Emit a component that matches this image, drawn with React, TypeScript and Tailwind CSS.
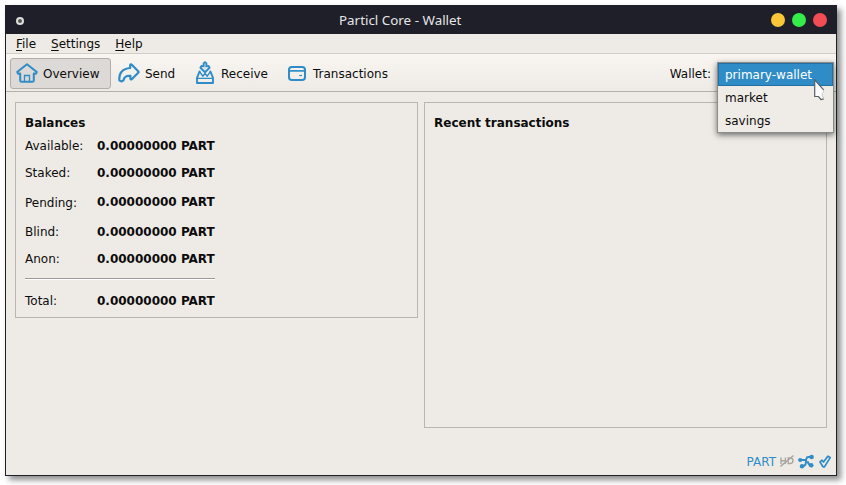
import React from "react";

const BLUE = "#308cc6";

function HomeIcon() {
  return (
    <svg width="22" height="20" viewBox="0 0 22 20" fill="none" stroke={BLUE} strokeWidth="2" strokeLinejoin="round" strokeLinecap="round">
      <path d="M11 1.2 L1.2 9 L2.2 10.8 L4.2 10.4 V17.4 Q4.2 18.8 5.6 18.8 H16.4 Q17.8 18.8 17.8 17.4 V10.4 L19.8 10.8 L20.8 9 Z" />
      <path d="M8.5 18.5 V12.5 H13.5 V18.5" strokeWidth="1.3" strokeLinejoin="miter" />
    </svg>
  );
}

function SendIcon() {
  return (
    <svg width="22" height="20" viewBox="0 0 22 20" fill="none" stroke={BLUE} strokeWidth="2.2" strokeLinejoin="round" strokeLinecap="round">
      <path d="M12.2 2 Q12.8 0.8 13.8 1.8 L20.2 8.2 Q21 9 20.2 9.8 L14 16 Q12.4 17 12.4 15.6 V12.8 C8.4 12.4 6.2 13.6 5.4 17.4 L3.8 18.4 L1.4 17.4 C0.6 9.4 5 5.6 12.2 5 Z" />
    </svg>
  );
}

function ReceiveIcon() {
  return (
    <svg width="18" height="23" viewBox="0 0 18 23" fill="none" stroke={BLUE} strokeWidth="1.9" strokeLinejoin="round" strokeLinecap="round">
      <path d="M7.6 5.4 V2.4 Q9 0 10.4 2.4 V5.4 L12.6 5 L13.6 6.8 L9 11.2 L4.4 6.8 L5.4 5 Z" />
      <path d="M9 2 V8" strokeWidth="0.9" strokeOpacity="0.4" />
      <path d="M3.6 10.4 L1 16.8 V22 H17 V16.8 L14.4 10.4" />
      <path d="M3.8 10.8 L6.8 15.2 L9 12.4 L11.2 15.2 L14.2 10.8" strokeWidth="1.5" />
      <path d="M1.5 17.3 H16.5" strokeWidth="1.3" />
    </svg>
  );
}

function CardIcon() {
  return (
    <svg width="18" height="15" viewBox="0 0 18 15" fill="none" stroke={BLUE} strokeWidth="2">
      <rect x="1" y="1" width="16" height="13" rx="2.8" />
      <path d="M1 4.9 H17" strokeWidth="1.7" />
      <path d="M11.2 9.5 H14" strokeWidth="1.2" />
    </svg>
  );
}

function TitleBar() {
  return (
    <div className="relative flex h-[29px] shrink-0 items-center bg-[#1f1f29] pr-[9px] pl-[10px]">
      <span className="relative top-px h-[8px] w-[8px] rounded-full border-2 border-[#dedede] bg-[#555550]" />
      <span className="absolute top-[6px] left-[333px] text-[13.4px] leading-[19px] whitespace-pre text-[#e6e6e6] [font-family:'Noto_Sans',sans-serif]">Particl Core - Wallet</span>
      <div className="ml-auto flex gap-[7px]">
        <span className="h-[14px] w-[14px] rounded-full bg-[#fbc638]" />
        <span className="h-[14px] w-[14px] rounded-full bg-[#35ec49]" />
        <span className="h-[14px] w-[14px] rounded-full bg-[#f24d55]" />
      </div>
    </div>
  );
}

function MenuItem({ name, className }: { name: string; className?: string }) {
  return (
    <span className={className}>
      <span className="underline decoration-1 underline-offset-2">{name[0]}</span>
      {name.slice(1)}
    </span>
  );
}

function Toolbar() {
  return (
    <div className="flex h-[38px] shrink-0 items-start border-b border-[#b4b1ad] bg-linear-to-b from-[#f9f6f2] to-[#eeebe6] pt-1 pl-1">
      <div className="flex h-[31px] w-[101px] items-center rounded-[3px] border border-[#b2afab] bg-[#dcd9d6] pl-[5px]">
        <span className="relative -top-px"><HomeIcon /></span>
        <span className="ml-[5px]">Overview</span>
      </div>
      <div className="ml-[7px] flex h-[31px] w-[78px] items-center">
        <span className="relative -top-px"><SendIcon /></span>
        <span className="ml-[5px]">Send</span>
      </div>
      <div className="flex h-[31px] w-[92px] items-center">
        <span className="relative -top-px"><ReceiveIcon /></span>
        <span className="ml-[7px]">Receive</span>
      </div>
      <div className="flex h-[31px] items-center">
        <CardIcon />
        <span className="ml-[7px]">Transactions</span>
      </div>
      <span className="mr-[125px] ml-auto flex h-[31px] items-center">Wallet:</span>
    </div>
  );
}

function Row({ label, className, labelClass = "" }: { label: string; className: string; labelClass?: string }) {
  return (
    <div className={`flex h-[14px] ${className}`}>
      <span className={`w-[72px] ${labelClass}`}>{label}</span>
      <span className="font-bold">0.00000000 PART</span>
    </div>
  );
}

function StatusBar() {
  return (
    <div className="mt-auto mr-[5px] mb-[5px] flex h-[16px] items-center justify-end text-[#308cc6]">
      <span>PART</span>
      <svg className="relative -top-px ml-[4px]" width="14" height="14" viewBox="0 0 14 14" fill="none" stroke="#aaa7a2" strokeWidth="1.4">
        <path d="M1 3.5 V10 M5.4 3.5 V10 M1 6.8 H5.4 M8.2 4 V9.5 H10.5 Q13 9.2 13 6.8 Q13 4.2 10.5 4 Z" />
        <path d="M0.5 12.3 L13.5 1.5" strokeWidth="1.5" />
      </svg>
      <svg className="relative -top-px ml-[4px]" width="16" height="15" viewBox="0 0 16 15" fill={BLUE} stroke={BLUE} strokeWidth="1.9">
        <path d="M2 6 H7.5 M13.5 3 H10.4 Q8.6 3 8.4 4.6 L7.6 10 Q7.2 12 4 12.2 M8 8.2 H10 Q10.6 11 13 11" fill="none" />
        <g stroke="none">
          <circle cx="2.2" cy="6" r="2.1" />
          <circle cx="13.6" cy="3" r="2.3" />
          <circle cx="13.2" cy="11.2" r="2.3" />
          <circle cx="4" cy="12.3" r="2.2" />
        </g>
      </svg>
      <svg className="relative -top-px ml-[5px]" width="12" height="13" viewBox="0 0 12 13" fill="none" stroke={BLUE} strokeWidth="1.7" strokeLinejoin="round">
        <path d="M1 7 L3 5.2 L4.5 7 L8.8 1.2 L11.2 2.6 L5.5 11.8 H4 Z" />
      </svg>
    </div>
  );
}

function WalletMenu() {
  return (
    <div className="absolute top-[62px] left-[717px] h-[71px] w-[117px] border border-[#8d8b88] bg-[#efebe7] shadow-[0_2px_6px_rgba(0,0,0,0.55)]">
      <div className="flex h-[23px] items-center border border-[#2270a2] bg-[#308cc6] pl-[6px] text-white">primary-wallet</div>
      <div className="flex h-[23px] items-center pl-[7px]">market</div>
      <div className="flex h-[23px] items-center pl-[7px]">savings</div>
      <svg className="absolute top-[16px] left-[96px]" width="12" height="22" viewBox="0 0 12 22">
        <path d="M0.7 0.8 V17.5 H4.5 L7.2 20.5 L9.8 20 L8 16 L9.8 14.5 V11.2 Z" fill="#fcfcfc" />
        <path d="M9.6 10.8 L0.7 0.8 V17.5 H4.5 L7 20.5 L9.8 19.8" fill="none" stroke="#566068" strokeWidth="1.2" />
        <path d="M9.6 11 V13.2 L7.8 15 L9.6 19.6" fill="none" stroke="#b4b8ba" strokeWidth="0.8" />
      </svg>
    </div>
  );
}

export default function App() {
  return (
    <div className="relative h-[485px] w-[846px] overflow-hidden bg-white p-[5px] text-[12px] leading-[14px] text-[#0c0c0c] [font-family:'DejaVu_Sans',sans-serif]">
      <div className="flex h-[471px] w-[832px] flex-col border-r border-b border-l border-[#1f1f29] bg-[#eeebe6] shadow-[4px_4px_6px_rgba(0,0,0,0.45)]">
        <TitleBar />
        <div className="flex h-[20px] shrink-0 items-center border-b border-[#d1ceca] pl-[10px]">
          <MenuItem name="File" />
          <MenuItem name="Settings" className="ml-[15px]" />
          <MenuItem name="Help" className="ml-[15px]" />
        </div>
        <Toolbar />
        <div className="flex items-start gap-[6px] pt-[10px] pl-[9px]">
          <div className="h-[216px] w-[403px] border border-[#b8b5b2] px-[9px] pt-[13px]">
            <div className="font-bold">Balances</div>
            <Row label="Available:" className="mt-[9px]" />
            <Row label="Staked:" className="mt-[13px]" />
            <Row label="Pending:" className="mt-[15px]" labelClass="pt-px" />
            <Row label="Blind:" className="mt-[16px]" />
            <Row label="Anon:" className="mt-[13px]" />
            <div className="mt-[12px] h-[2px] w-[190px] border-t border-[#9b9895] bg-white" />
            <Row label="Total:" className="mt-[14px]" />
          </div>
          <div className="h-[326px] w-[403px] border border-[#b8b5b2] px-[9px] pt-[13px]">
            <div className="font-bold">Recent transactions</div>
          </div>
        </div>
        <StatusBar />
      </div>
      <WalletMenu />
    </div>
  );
}
